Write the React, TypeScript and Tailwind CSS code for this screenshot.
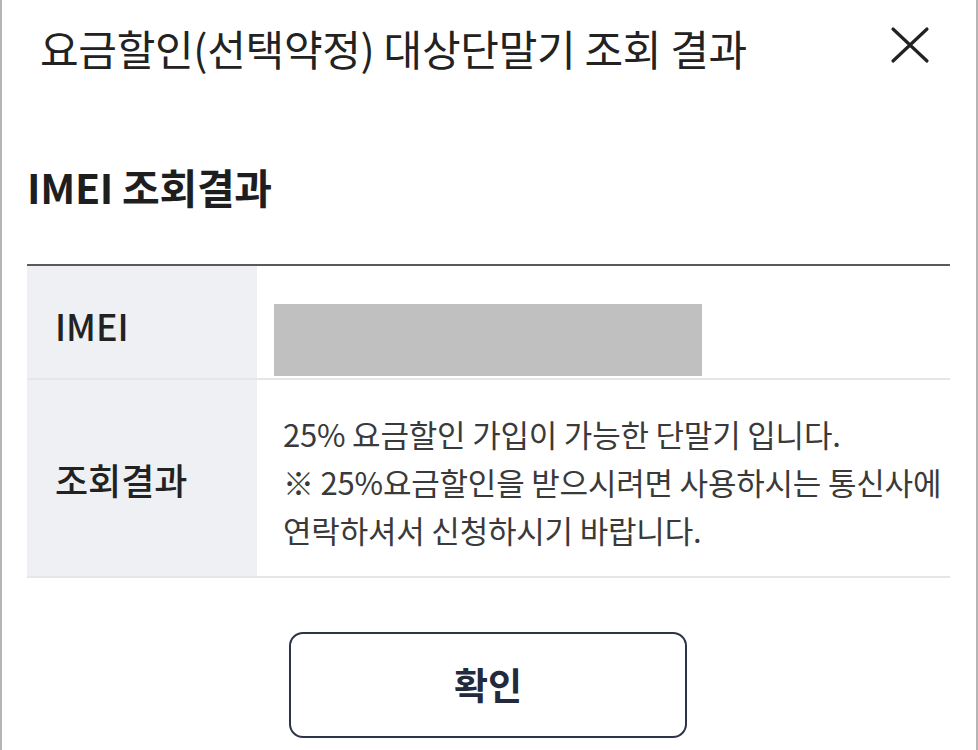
import React from "react";

const font = { fontFamily: '"Noto Sans CJK KR", "Noto Sans", sans-serif' };

export default function App() {
  return (
    <div
      className="w-[978px] h-[750px] bg-white border-l-2 border-r-2 border-[#b5b5b5] overflow-hidden flex flex-col"
      style={font}
    >
      <div className="flex items-start justify-between pl-[38px] pr-[46px] pt-[19px]">
        <h1 className="text-[42px] leading-[58px] font-normal text-[#222] tracking-[-0.3px]">
          요금할인(선택약정) 대상단말기 조회 결과
        </h1>
        <svg width="40" height="38" viewBox="0 0 40 38" className="mt-[7px]">
          <path d="M3 3 L37 35 M37 3 L3 35" stroke="#222" strokeWidth="3.2" strokeLinecap="round" />
        </svg>
      </div>

      <h2 className="mt-[85px] pl-[25px] text-[41px] leading-[48px] font-bold text-[#1e1e1e] tracking-[-0.3px]">
        IMEI 조회결과
      </h2>

      <div className="mt-[54px] ml-[25px] w-[923px] border-t-2 border-[#5a5a5a]">
        <div className="flex h-[114px] border-b-2 border-[#e6e6e8]">
          <div className="w-[230px] bg-[#eef0f4] flex items-center pl-[28px] pt-[6px] text-[36px] font-medium text-[#222]">
            IMEI
          </div>
          <div className="flex-1 pl-[17px] pt-[38px]">
            <div className="w-[428px] h-[72px] bg-[#c0c0c0]" />
          </div>
        </div>
        <div className="flex h-[198px] border-b-2 border-[#e6e6e8]">
          <div className="w-[230px] bg-[#eef0f4] flex items-center pl-[28px] pt-[2px] text-[36px] font-medium text-[#222]">
            조회결과
          </div>
          <div className="flex-1 pl-[26px] flex items-center text-[31px] leading-[48px] text-[#3a3a3a] tracking-[-0.2px] pt-[8px]">
            <p>
              25% 요금할인 가입이 가능한 단말기 입니다.
              <br />※ 25%요금할인을 받으시려면 사용하시는 통신사에
              <br />
              연락하셔서 신청하시기 바랍니다.
            </p>
          </div>
        </div>
      </div>

      <div className="flex justify-center mt-[54px] pr-[2px]">
        <button className="w-[398px] h-[106px] border-2 border-[#2d3448] rounded-[14px] bg-white text-[37px] font-bold text-[#222a3b]">
          확인
        </button>
      </div>
    </div>
  );
}
